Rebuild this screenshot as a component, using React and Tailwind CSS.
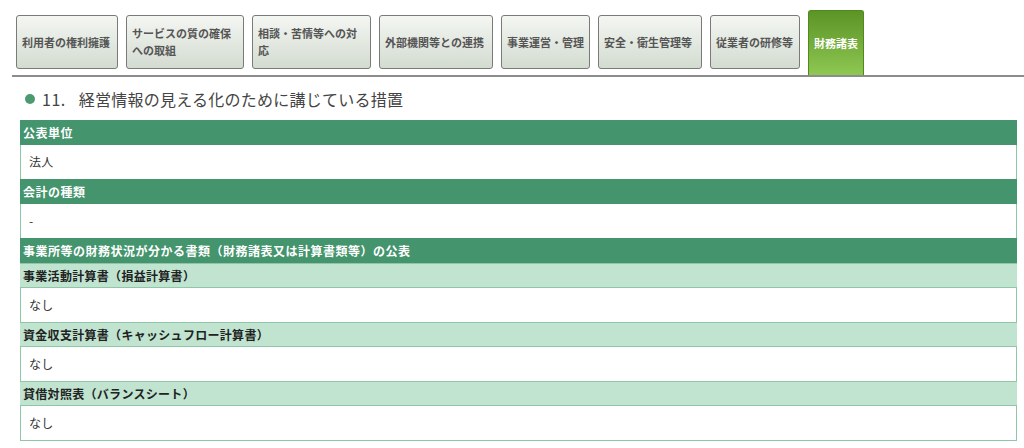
const tabs = [
  { label: '利用者の権利擁護', w: 'w-[102px]' },
  { label: 'サービスの質の確保への取組', w: 'w-[118px]' },
  { label: '相談・苦情等への対応', w: 'w-[119px]' },
  { label: '外部機関等との連携', w: 'w-[114px]' },
  { label: '事業運営・管理', w: 'w-[89px]' },
  { label: '安全・衛生管理等', w: 'w-[104px]' },
  { label: '従業者の研修等', w: 'w-[90px]' },
];

// rows of the disclosure table: head = dark band, sub = pale band, value = white row
const rows = [
  { type: 'head', text: '公表単位' },
  { type: 'value', text: '法人' },
  { type: 'head', text: '会計の種類' },
  { type: 'value', text: '-' },
  { type: 'head', text: '事業所等の財務状況が分かる書類（財務諸表又は計算書類等）の公表' },
  { type: 'sub', text: '事業活動計算書（損益計算書）' },
  { type: 'value', text: 'なし' },
  { type: 'sub', text: '資金収支計算書（キャッシュフロー計算書）' },
  { type: 'value', text: 'なし' },
  { type: 'sub', text: '貸借対照表（バランスシート）' },
  { type: 'value', text: 'なし' },
];

const Row = ({ type, text }) => {
  if (type === 'head') {
    return (
      <div className="h-[25px] bg-[#44946d] text-white font-bold text-[12px] tracking-[0.5px] leading-[25px] pl-[3px]">
        {text}
      </div>
    );
  }
  if (type === 'sub') {
    return (
      <div className="h-[25px] bg-[#c0e4d0] border-y border-[#8fc6a8] text-[#222] font-bold text-[12px] tracking-[0.3px] leading-[23px] pl-[3px]">
        {text}
      </div>
    );
  }
  return (
    <div className="h-[34px] bg-white border-x border-[#8fc6a8] text-[#333] text-[12px] tracking-[0.3px] leading-[34px] pl-[8px]">
      {text}
    </div>
  );
};

export default function App() {
  return (
    <div
      className="w-[1024px] h-[448px] bg-white overflow-hidden"
      style={{ fontFamily: '"Noto Sans CJK JP", "Noto Sans", sans-serif' }}
    >
      {/* tab bar */}
      <div className="ml-[12px] h-[77px] border-b-2 border-[#8c8c8c] flex items-start gap-2 pl-[4px]">
        {tabs.map((t) => (
          <div
            key={t.label}
            className={`${t.w} mt-[15px] h-[54px] rounded-[3px] border border-[#7a7a78] bg-gradient-to-b from-[#f4f6f2] to-[#d3dcd1] flex items-center px-[5px] text-[11px] leading-[17px] font-bold text-[#555]`}
          >
            {t.label}
          </div>
        ))}
        <div className="w-[56px] mt-[10px] h-[65px] rounded-t-[3px] border border-b-0 border-[#4f8a1e] bg-gradient-to-b from-[#5c9426] to-[#8fc752] flex items-center justify-center text-[11px] font-bold text-white">
          財務諸表
        </div>
      </div>

      {/* section title */}
      <div className="h-[43px] pl-[25px] flex items-center gap-[7px] text-[16px] text-[#444]">
        <span className="w-[10px] h-[10px] rounded-full bg-[#4c9a70]" />
        <span className="tracking-[0.5px]">11.</span>
        <span className="ml-[6px] tracking-[0.25px]">経営情報の見える化のために講じている措置</span>
      </div>

      {/* disclosure table */}
      <div className="ml-[20px] w-[997px] border-b border-[#8fc6a8]">
        {rows.map((r, i) => (
          <Row key={i} {...r} />
        ))}
      </div>
    </div>
  );
}
